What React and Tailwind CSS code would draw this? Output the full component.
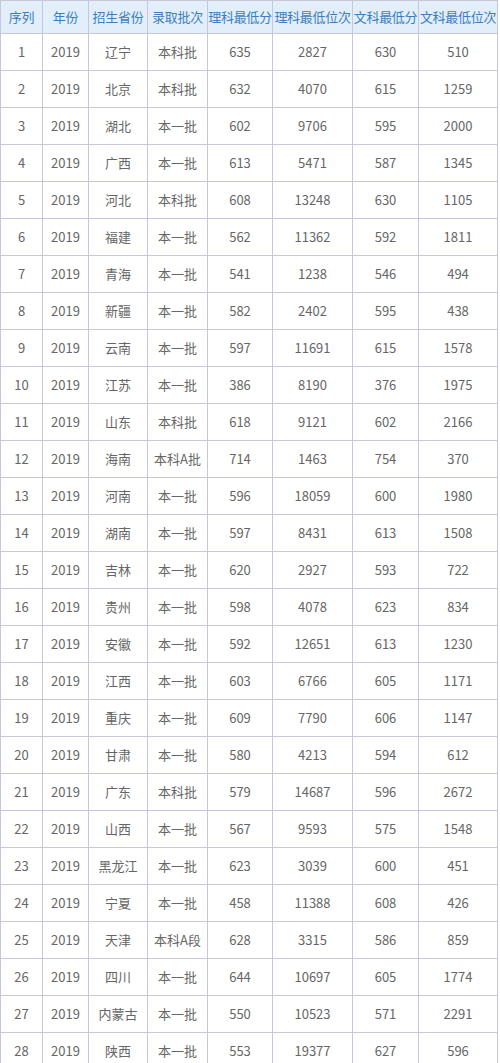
const headers = ["序列", "年份", "招生省份", "录取批次", "理科最低分", "理科最低位次", "文科最低分", "文科最低位次"];

const rows = [
  ["辽宁", "本科批", 635, 2827, 630, 510],
  ["北京", "本科批", 632, 4070, 615, 1259],
  ["湖北", "本一批", 602, 9706, 595, 2000],
  ["广西", "本一批", 613, 5471, 587, 1345],
  ["河北", "本科批", 608, 13248, 630, 1105],
  ["福建", "本一批", 562, 11362, 592, 1811],
  ["青海", "本一批", 541, 1238, 546, 494],
  ["新疆", "本一批", 582, 2402, 595, 438],
  ["云南", "本一批", 597, 11691, 615, 1578],
  ["江苏", "本一批", 386, 8190, 376, 1975],
  ["山东", "本科批", 618, 9121, 602, 2166],
  ["海南", "本科A批", 714, 1463, 754, 370],
  ["河南", "本一批", 596, 18059, 600, 1980],
  ["湖南", "本一批", 597, 8431, 613, 1508],
  ["吉林", "本一批", 620, 2927, 593, 722],
  ["贵州", "本一批", 598, 4078, 623, 834],
  ["安徽", "本一批", 592, 12651, 613, 1230],
  ["江西", "本一批", 603, 6766, 605, 1171],
  ["重庆", "本一批", 609, 7790, 606, 1147],
  ["甘肃", "本一批", 580, 4213, 594, 612],
  ["广东", "本科批", 579, 14687, 596, 2672],
  ["山西", "本一批", 567, 9593, 575, 1548],
  ["黑龙江", "本一批", 623, 3039, 600, 451],
  ["宁夏", "本一批", 458, 11388, 608, 426],
  ["天津", "本科A段", 628, 3315, 586, 859],
  ["四川", "本一批", 644, 10697, 605, 1774],
  ["内蒙古", "本一批", 550, 10523, 571, 2291],
  ["陕西", "本一批", 553, 19377, 627, 596],
];

const widths = [42, 46, 59, 60, 65, 80, 66, 79];

export default function App() {
  return (
    <div className="w-[500px] bg-white" style={{ fontFamily: '"Noto Sans CJK SC", "Noto Sans", sans-serif' }}>
      <table className="table-fixed border-collapse w-[497px] text-center">
        <colgroup>
          {widths.map((w, i) => (
            <col key={i} style={{ width: w }} />
          ))}
        </colgroup>
        <thead>
          <tr className="h-[33px] bg-[#e2effa]">
            {headers.map((h) => (
              <th key={h} className="border border-[#c9c6dc] p-0 font-normal text-[13px] text-[#3b7dbf] whitespace-nowrap tracking-[-0.3px]">
                {h}
              </th>
            ))}
          </tr>
        </thead>
        <tbody>
          {rows.map((r, i) => (
            <tr key={i} className="h-[37px]">
              <td className="border border-[#c9c6dc] p-0 text-[13px] text-[#666]">{i + 1}</td>
              <td className="border border-[#c9c6dc] p-0 text-[13px] text-[#666]">2019</td>
              {r.map((c, j) => (
                <td key={j} className="border border-[#c9c6dc] p-0 text-[13px] text-[#666] whitespace-nowrap">
                  {c}
                </td>
              ))}
            </tr>
          ))}
        </tbody>
      </table>
    </div>
  );
}
